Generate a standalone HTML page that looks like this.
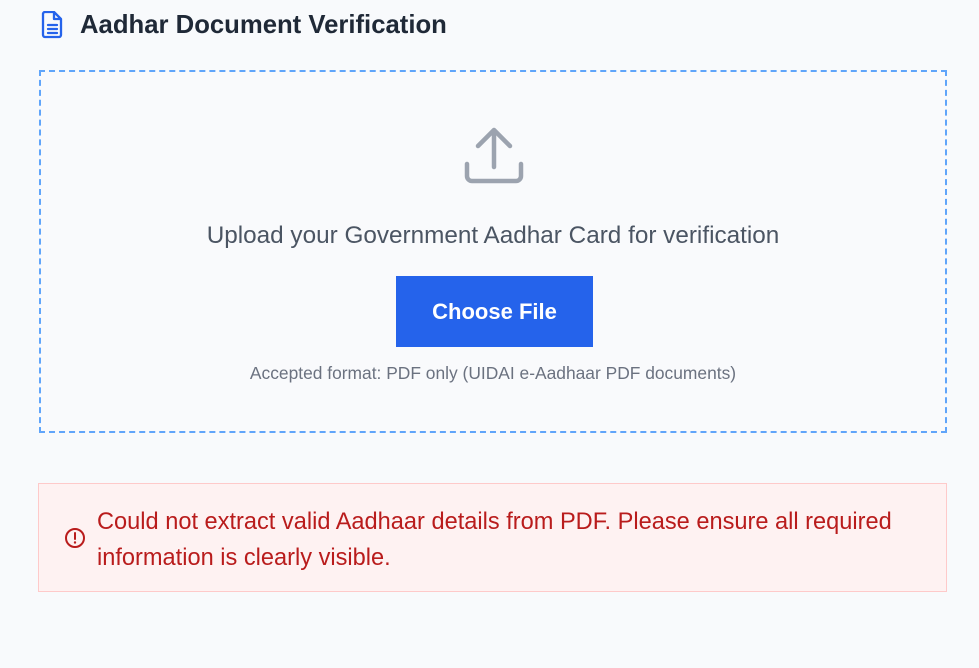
<!DOCTYPE html>
<html><head><style>
body{margin:0;width:979px;height:668px;background:#f8fafc;font-family:"Liberation Sans",sans-serif;position:relative;overflow:hidden}
.t{position:absolute;left:80px;top:11px;font-size:25.7px;font-weight:600;color:#1f2937}
.box{position:absolute;left:39px;top:70px;width:904px;height:359px;border:2px dashed #60a5fa;background:#f9fafc}
.up{position:absolute;left:0;right:0;text-align:center;font-size:24.3px;color:#4b5563}
.btn{position:absolute;left:355px;top:204px;width:197px;height:71px;background:#2563eb;color:#fff;font-size:22px;font-weight:600;display:flex;align-items:center;justify-content:center}
.acc{position:absolute;left:0;right:0;top:291px;text-align:center;font-size:17.4px;color:#6b7280}
.err{position:absolute;left:38px;top:483px;width:907px;height:107px;border:1px solid #fecaca;background:#fef2f2}
.et{position:absolute;left:58px;top:20px;font-size:23.6px;line-height:36px;color:#b91c1c;white-space:nowrap}
</style></head><body>
<svg style="position:absolute;left:40px;top:11px" width="26" height="28" viewBox="0 0 26 28"><path d="M3 3a2 2 0 0 1 2-2h9l7 7v16a2 2 0 0 1-2 2H5a2 2 0 0 1-2-2z M14 1v7h7 M8 14h9 M8 18h9 M8 22h9" fill="none" stroke="#2563eb" stroke-width="2.3" stroke-linejoin="round" stroke-linecap="round"/></svg>
<div class="t">Aadhar Document Verification</div>
<div class="box">
<svg style="position:absolute;left:420px;top:50px" width="70" height="70" viewBox="0 0 70 70"><path d="M33 8v37 M17 24l16-16 16 16 M6 42v12a5 5 0 0 0 5 5h44a5 5 0 0 0 5-5V42" fill="none" stroke="#9ca3af" stroke-width="4.5" stroke-linecap="round" stroke-linejoin="round"/></svg>
<div class="up" style="top:150px">Upload your Government Aadhar Card for verification</div>
<div class="btn">Choose File</div>
<div class="acc">Accepted format: PDF only (UIDAI e-Aadhaar PDF documents)</div>
</div>
<div class="err">
<svg style="position:absolute;left:25px;top:43px" width="22" height="22" viewBox="0 0 22 22"><circle cx="11" cy="11" r="9" fill="none" stroke="#b91c1c" stroke-width="2"/><path d="M11 6v6" stroke="#b91c1c" stroke-width="2" stroke-linecap="round"/><circle cx="11" cy="15.5" r="1.2" fill="#b91c1c"/></svg>
<div class="et">Could not extract valid Aadhaar details from PDF. Please ensure all required<br>information is clearly visible.</div>
</div>
</body></html>
